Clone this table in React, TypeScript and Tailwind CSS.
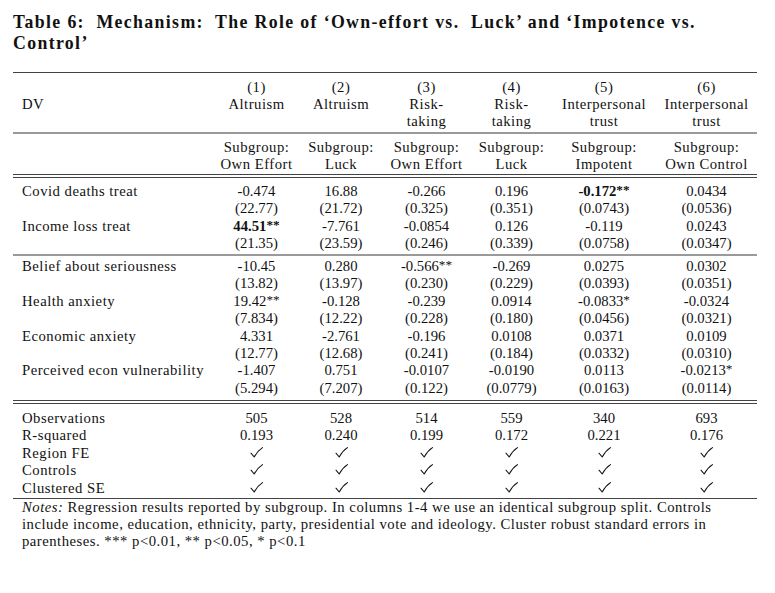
import React from "react";

const COLS = "grid grid-cols-[200px_87px_82px_89px_81px_104px_101px]";

type Row = [string, string[]];

const block1: Row[] = [
  ["Covid deaths treat", ["-0.474", "16.88", "-0.266", "0.196", "!-0.172**", "0.0434"]],
  ["", ["(22.77)", "(21.72)", "(0.325)", "(0.351)", "(0.0743)", "(0.0536)"]],
  ["Income loss treat", ["!44.51**", "-7.761", "-0.0854", "0.126", "-0.119", "0.0243"]],
  ["", ["(21.35)", "(23.59)", "(0.246)", "(0.339)", "(0.0758)", "(0.0347)"]],
];

const block2: Row[] = [
  ["Belief about seriousness", ["-10.45", "0.280", "-0.566**", "-0.269", "0.0275", "0.0302"]],
  ["", ["(13.82)", "(13.97)", "(0.230)", "(0.229)", "(0.0393)", "(0.0351)"]],
  ["Health anxiety", ["19.42**", "-0.128", "-0.239", "0.0914", "-0.0833*", "-0.0324"]],
  ["", ["(7.834)", "(12.22)", "(0.228)", "(0.180)", "(0.0456)", "(0.0321)"]],
  ["Economic anxiety", ["4.331", "-2.761", "-0.196", "0.0108", "0.0371", "0.0109"]],
  ["", ["(12.77)", "(12.68)", "(0.241)", "(0.184)", "(0.0332)", "(0.0310)"]],
  ["Perceived econ vulnerability", ["-1.407", "0.751", "-0.0107", "-0.0190", "0.0113", "-0.0213*"]],
  ["", ["(5.294)", "(7.207)", "(0.122)", "(0.0779)", "(0.0163)", "(0.0114)"]],
];

const CK = "✓";
const block3: Row[] = [
  ["Observations", ["505", "528", "514", "559", "340", "693"]],
  ["R-squared", ["0.193", "0.240", "0.199", "0.172", "0.221", "0.176"]],
  ["Region FE", [CK, CK, CK, CK, CK, CK]],
  ["Controls", [CK, CK, CK, CK, CK, CK]],
  ["Clustered SE", [CK, CK, CK, CK, CK, CK]],
];

function Check() {
  return (
    <svg width="13" height="11" viewBox="0 0 13 11" className="inline-block align-baseline">
      <path d="M1 6.2 L4.2 10 C6.2 6.2 8.8 3 12.5 0.6" fill="none" stroke="#111" strokeWidth="1.05" strokeLinecap="round" strokeLinejoin="round" />
    </svg>
  );
}

function Cell({ s }: { s: string }) {
  if (s === CK) return <Check />;
  let bold = false;
  let t = s;
  if (t.startsWith("!")) {
    bold = true;
    t = t.slice(1);
  }
  const m = t.match(/^(.*?)(\**)$/);
  const v = m ? m[1] : t;
  const stars = m ? m[2] : "";
  return (
    <span className={bold ? "font-bold" : ""}>
      {v}
      {stars && <span className="relative top-[-2px] text-[0.9em]">{stars}</span>}
    </span>
  );
}

function Block({ rows, lh }: { rows: Row[]; lh: string }) {
  return (
    <div className={lh}>
      {rows.map((r, i) => (
        <div key={i} className={COLS}>
          <div className="pl-[9px] tracking-[0.5px] whitespace-nowrap">{r[0]}</div>
          {r[1].map((c, j) => (
            <div key={j} className="text-center whitespace-nowrap">
              <Cell s={c} />
            </div>
          ))}
        </div>
      ))}
    </div>
  );
}

const heads: string[][] = [
  ["(1)", "Altruism", ""],
  ["(2)", "Altruism", ""],
  ["(3)", "Risk-", "taking"],
  ["(4)", "Risk-", "taking"],
  ["(5)", "Interpersonal", "trust"],
  ["(6)", "Interpersonal", "trust"],
];

const subs: string[][] = [
  ["Subgroup:", "Own Effort"],
  ["Subgroup:", "Luck"],
  ["Subgroup:", "Own Effort"],
  ["Subgroup:", "Luck"],
  ["Subgroup:", "Impotent"],
  ["Subgroup:", "Own Control"],
];

export default function App() {
  return (
    <div className="w-[775px] h-[593px] bg-white text-[#111] font-['Liberation_Serif',serif] text-[14.7px] overflow-hidden">
      <div className="pl-[13px] pr-[18px]">
        <div className="pt-[12px] font-bold text-[17.8px] leading-[20.5px] tracking-[1.35px] whitespace-pre">
          <div>{"Table 6:  Mechanism:  The Role of ‘Own-effort vs.  Luck’ and ‘Impotence vs."}</div>
          <div>{"Control’"}</div>
        </div>

        <div className="mt-[19px] h-px bg-[#444]" />

        <div className={`${COLS} pt-[6px] leading-[17px] tracking-[0.5px]`}>
          <div className="pl-[9px] flex items-center">DV</div>
          {heads.map((h, i) => (
            <div key={i} className="text-center whitespace-nowrap">
              {h.map((l, j) => (
                <div key={j} className="h-[17px]">{l}</div>
              ))}
            </div>
          ))}
        </div>

        <div className="mt-[2px] h-[2px] bg-[#9a9a9a]" />

        <div className={`${COLS} mt-[4.5px] leading-[17px] tracking-[0.5px]`}>
          <div />
          {subs.map((h, i) => (
            <div key={i} className="text-center whitespace-nowrap">
              {h.map((l, j) => (
                <div key={j} className="h-[17px]">{l}</div>
              ))}
            </div>
          ))}
        </div>

        <div className="mt-[1px] h-[4px] border-t border-b border-[#444]" />

        <div className="mt-[5.3px]">
          <Block rows={block1} lh="leading-[17.4px]" />
        </div>

        <div className="mt-[2px] h-[2px] bg-[#9a9a9a]" />

        <div className="mt-[1.6px]">
          <Block rows={block2} lh="leading-[17.4px]" />
        </div>

        <div className="mt-[2.8px] h-[4px] border-t border-b border-[#444]" />

        <div className="mt-[5.6px]">
          <Block rows={block3} lh="leading-[17.5px]" />
        </div>

        <div className="mt-[0.4px] h-px bg-[#444]" />

        <div className="pl-[9px] leading-[17px] tracking-[0.5px] whitespace-nowrap">
          <div>
            <i>Notes:</i> Regression results reported by subgroup. In columns 1-4 we use an identical subgroup split. Controls
          </div>
          <div>include income, education, ethnicity, party, presidential vote and ideology. Cluster robust standard errors in</div>
          <div>{"parentheses. *** p<0.01, ** p<0.05, * p<0.1"}</div>
        </div>
      </div>
    </div>
  );
}
